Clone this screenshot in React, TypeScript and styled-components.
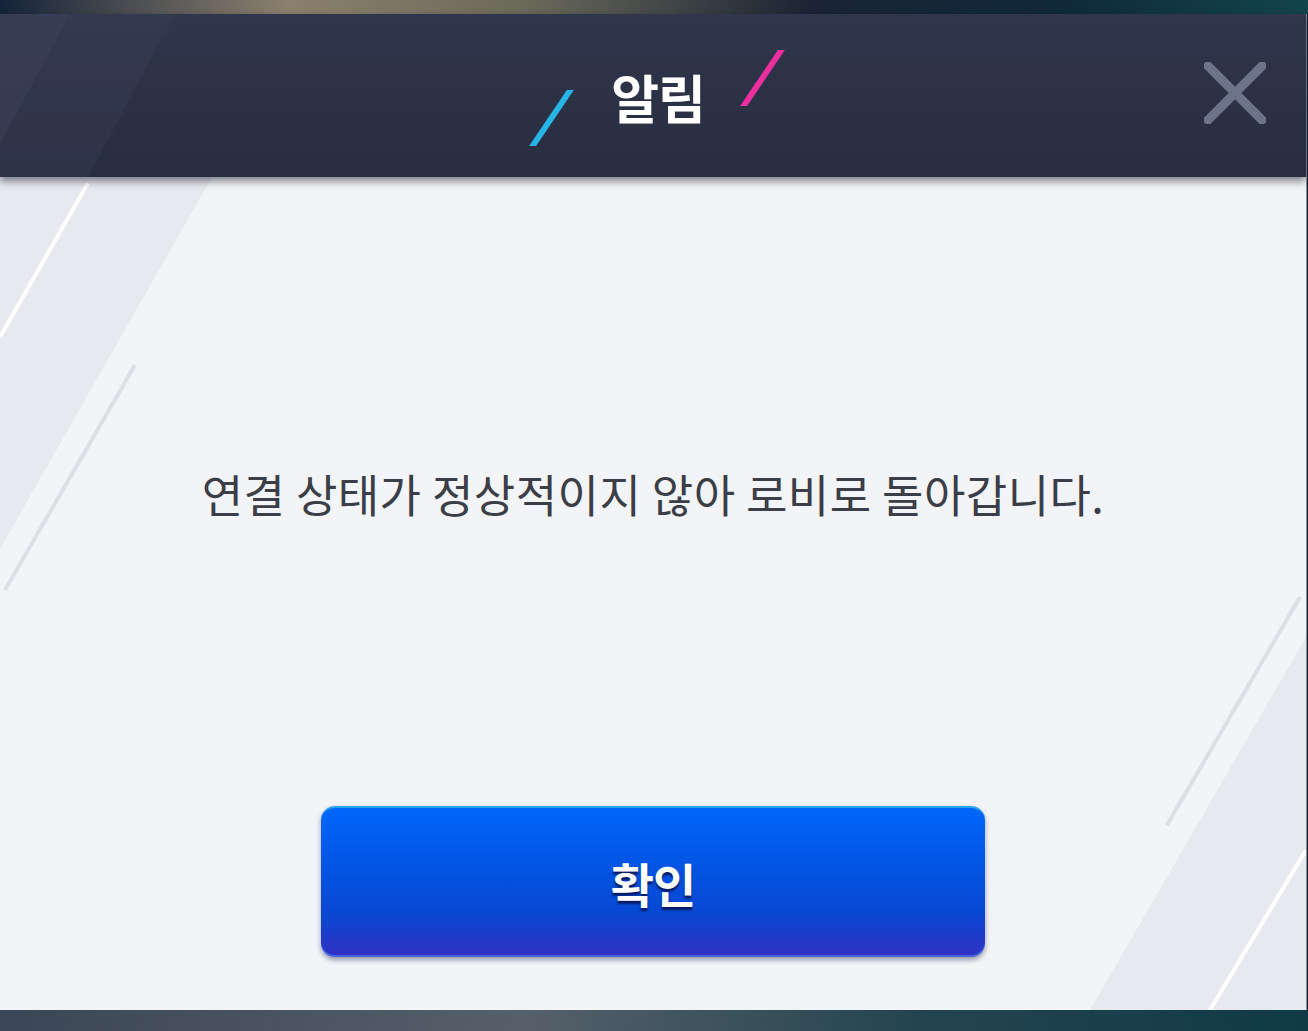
import * as React from "react";
import styled, { createGlobalStyle } from "styled-components";

const GlobalStyle = createGlobalStyle`
  html, body {
    margin: 0;
    padding: 0;
    width: 100%;
    height: 100%;
    overflow: hidden;
  }
  body {
    font-family: "Noto Sans CJK KR", "Noto Sans", sans-serif;
  }
`;

const Screen = styled.div`
  width: 1308px;
  height: 1031px;
  display: flex;
  flex-direction: column;
  background:
    linear-gradient(90deg, #3b4656 0%, #56606a 40%, #24454f 70%, #0f3a46 100%) bottom / 100% 21px no-repeat,
    linear-gradient(90deg, #15243a 0%, #8c806e 22%, #6b6a5a 40%, #1a2434 62%, #10283a 80%, #12454c 100%) top / 100% 14px no-repeat,
    #14233a;
`;

const Dialog = styled.section`
  margin-top: 14px;
  width: 1306px;
  height: 996px;
  display: flex;
  flex-direction: column;
  position: relative;
  background: #f3f4f7;
  box-shadow: 1px 0 0 #8a9098;
`;

const Header = styled.header`
  position: relative;
  z-index: 2;
  height: 163px;
  flex-shrink: 0;
  display: flex;
  align-items: center;
  justify-content: center;
  background: linear-gradient(180deg, #30364b 0%, #282d40 100%);
  box-shadow: 0 4px 8px rgba(20, 24, 36, 0.55);
  overflow: hidden;
`;

const HeaderSheen = styled.svg`
  position: absolute;
  left: 0;
  top: 0;
  width: 200px;
  height: 163px;
`;

const TitleGroup = styled.div`
  position: relative;
  display: flex;
  align-items: center;
  margin-left: 8px;
`;

const Title = styled.h1`
  margin: 0;
  color: #ffffff;
  font-size: 52px;
  font-weight: 700;
  line-height: 1;
  letter-spacing: -1px;
  padding-top: 2px;
`;

const Slash = styled.span<{ $color: string; $shift: number }>`
  display: block;
  width: 7px;
  height: 56px;
  background: ${(p) => p.$color};
  transform: translateY(${(p) => p.$shift}px) skewX(-34deg);
`;

const SlashLeft = styled(Slash)`
  margin-right: 56px;
`;

const SlashRight = styled(Slash)`
  margin-left: 54px;
`;

const CloseButton = styled.button`
  position: absolute;
  right: 40px;
  top: 48px;
  width: 62px;
  height: 62px;
  padding: 0;
  border: none;
  background: none;
  cursor: pointer;
`;

const Body = styled.div`
  position: relative;
  flex: 1;
  display: flex;
  flex-direction: column;
  align-items: center;
  overflow: hidden;
`;

const Decor = styled.svg`
  position: absolute;
  inset: 0;
  width: 100%;
  height: 100%;
  pointer-events: none;
`;

const MessageArea = styled.div`
  position: relative;
  flex: 1;
  display: flex;
  align-items: center;
  justify-content: center;
  padding-top: 4px;
`;

const Message = styled.p`
  margin: 0;
  color: #3b3e46;
  font-size: 45px;
  font-weight: 400;
  letter-spacing: 0.45px;
`;

const ConfirmButton = styled.button`
  position: relative;
  width: 664px;
  height: 151px;
  margin-bottom: 53px;
  border: none;
  border-top: 2px solid #2aa4ec;
  border-radius: 14px;
  background: linear-gradient(180deg, #0067fb 0%, #0356e6 35%, #0748d2 70%, #3330c2 100%);
  box-shadow: 0 3px 5px rgba(30, 40, 80, 0.45), inset 0 -2px 0 rgba(80, 140, 240, 0.6);
  color: #ffffff;
  font-family: "Noto Sans CJK KR", "Noto Sans", sans-serif;
  font-size: 47px;
  font-weight: 700;
  letter-spacing: -1px;
  text-shadow: 0 3px 2px rgba(10, 10, 60, 0.75);
  cursor: pointer;
`;

export default function App() {
  return (
    <Screen>
      <GlobalStyle />
      <Dialog>
        <Header>
          <HeaderSheen viewBox="0 0 200 163">
            <polygon points="0,0 175,0 88,163 0,163" fill="#3a4258" opacity="0.3" />
            <polygon points="0,0 70,0 0,130" fill="#464a66" opacity="0.3" />
          </HeaderSheen>
          <TitleGroup>
            <SlashLeft $color="#27b4e6" $shift={22} />
            <Title>알림</Title>
            <SlashRight $color="#ec2f9e" $shift={-18} />
          </TitleGroup>
          <CloseButton aria-label="닫기">
            <svg width="62" height="62" viewBox="0 0 62 62">
              <path d="M4 4 L58 58 M58 4 L4 58" stroke="#6d7388" strokeWidth="9" strokeLinecap="square" fill="none" />
            </svg>
          </CloseButton>
        </Header>
        <Body>
          <Decor viewBox="0 0 1306 833" preserveAspectRatio="none">
            <polygon points="0,0 212,0 0,372" fill="#e7e9ee" />
            <line x1="88" y1="6" x2="0" y2="160" stroke="#ffffff" strokeWidth="4" />
            <line x1="135" y1="188" x2="5" y2="413" stroke="#dcdfe4" strokeWidth="4" />
            <polygon points="1306,460 1306,833 1090,833" fill="#e7e9ee" />
            <line x1="1300" y1="420" x2="1167" y2="648" stroke="#dcdfe4" strokeWidth="4" />
            <line x1="1306" y1="673" x2="1210" y2="833" stroke="#ffffff" strokeWidth="4" />
          </Decor>
          <MessageArea>
            <Message>연결 상태가 정상적이지 않아 로비로 돌아갑니다.</Message>
          </MessageArea>
          <ConfirmButton>확인</ConfirmButton>
        </Body>
      </Dialog>
    </Screen>
  );
}
